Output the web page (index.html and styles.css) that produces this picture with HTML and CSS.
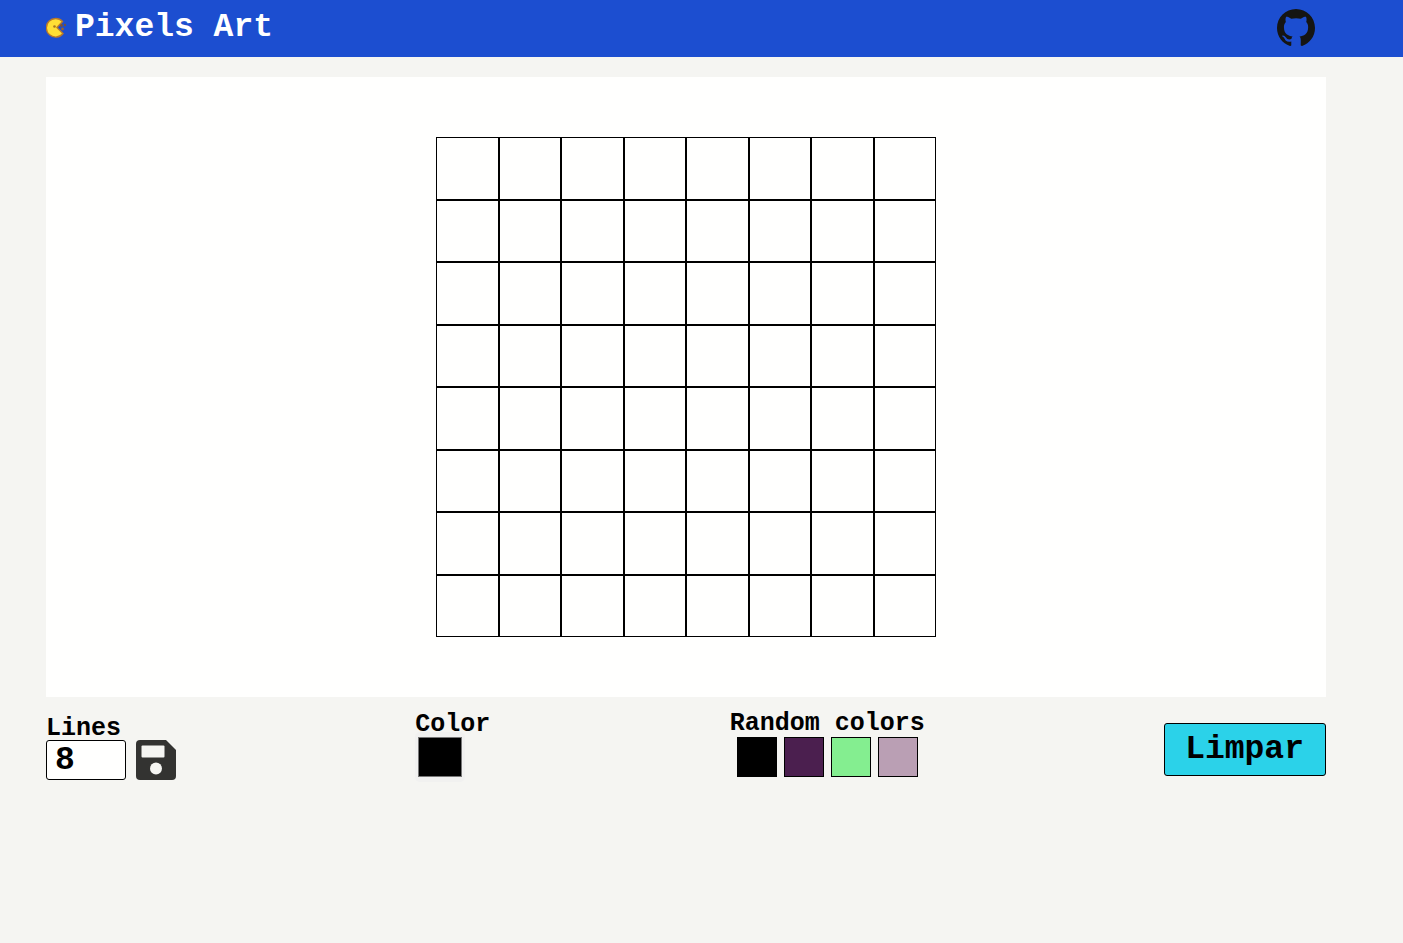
FILE: index.html
```html
<!DOCTYPE html>
<html lang="en">
<head>
<meta charset="utf-8">
<title>Pixels Art</title>
<link rel="stylesheet" href="styles.css">
</head>
<body>
<header class="header">
  <div class="brand">
    <svg class="brand-icon" viewBox="0 0 21 21" aria-hidden="true">
      <path d="M16.500 4.500 11 10.500 17 16.500A9.300 9.300 0 1 1 16.500 4.500Z" fill="#ffdf35" stroke="#b9792a" stroke-width="1.400"/>
      <circle cx="8.500" cy="9.500" r="1.300" fill="#a8741f"/>
      <circle cx="15.500" cy="8.500" r="1.400" fill="#7d5238"/>
      <circle cx="19" cy="8" r="1.200" fill="#75503f"/>
      <circle cx="16.500" cy="12" r="1.400" fill="#9b602a"/>
    </svg>
    <h1 class="title">Pixels Art</h1>
  </div>
  <a class="github" href="#" aria-label="GitHub">
    <svg class="github-icon" viewBox="0 0 16 16" aria-hidden="true"><path fill="#151513" d="M8 0C3.58 0 0 3.58 0 8c0 3.54 2.29 6.53 5.47 7.59.4.07.55-.17.55-.38 0-.19-.01-.82-.01-1.49-2.01.37-2.53-.49-2.69-.94-.09-.23-.48-.94-.82-1.13-.28-.15-.68-.52-.01-.53.63-.01 1.08.58 1.23.82.72 1.21 1.87.87 2.33.66.07-.52.28-.87.51-1.07-1.78-.2-3.64-.89-3.64-3.95 0-.87.31-1.59.82-2.15-.08-.2-.36-1.02.08-2.12 0 0 .67-.21 2.2.82.64-.18 1.32-.27 2-.27s1.36.09 2 .27c1.530-1.040 2.200-.82 2.200-.82.44 1.100.16 1.920.08 2.120.51.56.82 1.270.82 2.150 0 3.070-1.870 3.750-3.650 3.950.29.25.54.73.54 1.480 0 1.070-.01 1.930-.01 2.200 0 .21.15.46.55.38A8.010 8.010 0 0 0 16 8c0-4.420-3.580-8-8-8z"/></svg>
  </a>
</header>
<main class="main">
  <section class="canvas">
    <div class="board" id="board"></div>
  </section>
  <section class="controls">
    <div class="lines">
      <label class="label label-lines" for="lines">Lines</label>
      <div class="lines-row">
        <input class="lines-input" id="lines" type="number" value="8">
        <button class="save" type="button" aria-label="Save">
          <svg class="save-icon" viewBox="0 0 40 40" aria-hidden="true">
            <path fill="#333331" d="M4 0H30L40 10V36Q40 40 36 40H4Q0 40 0 36V4Q0 0 4 0Z"/>
            <rect x="5.500" y="5.500" width="23" height="12" rx="1" fill="#f5f5f2"/>
            <circle cx="20" cy="28.500" r="6" fill="#f5f5f2"/>
          </svg>
        </button>
      </div>
    </div>
    <div class="color">
      <label class="label label-color" for="color">Color</label>
      <input class="color-input" id="color" type="color" value="#000000">
    </div>
    <div class="palette">
      <span class="label label-palette" id="palette-label">Random colors</span>
      <div class="swatches" role="group" aria-labelledby="palette-label">
        <button class="swatch swatch-black" type="button" aria-label="Black"></button>
        <button class="swatch swatch-purple" type="button" aria-label="Purple"></button>
        <button class="swatch swatch-green" type="button" aria-label="Green"></button>
        <button class="swatch swatch-mauve" type="button" aria-label="Mauve"></button>
      </div>
    </div>
    <button class="clear" type="button">Limpar</button>
  </section>
</main>
<script src="script.js"></script>
</body>
</html>
```
FILE: styles.css
```css
* { box-sizing: border-box; }
body {
  margin: 0;
  background: #f5f5f2;
  color: #000;
  font-family: "Liberation Mono", monospace;
  font-weight: 700;
}
.header {
  display: flex;
  align-items: center;
  justify-content: space-between;
  min-height: 57px;
  padding: 0 88px 2px 46px;
  background: #1c4ed0;
}
.brand { display: flex; align-items: center; gap: 8px; }
.brand-icon { width: 21px; height: 21px; }
.title { margin: 0; color: #fff; font-size: 33px; line-height: 40px; }
.github, .github-icon { display: block; width: 38px; height: 38px; }
.main { padding: 20px 77px 20px 46px; }
.canvas {
  display: flex;
  justify-content: center;
  padding: 60px;
  background: #fffffe;
}
.board {
  display: grid;
  grid-template-columns: repeat(8, 1fr);
  width: 500px;
  aspect-ratio: 1;
}
.cell { border: 1px solid #000; }
.controls {
  display: flex;
  align-items: center;
  justify-content: space-between;
  padding-top: 17px;
}
.label { display: block; font-size: 25px; }
.label-lines { line-height: 22px; }
.label-palette { line-height: 20px; }
.label-color { line-height: 15px; }
.lines-row { display: flex; gap: 10px; }
.lines-input {
  width: 80px;
  height: 40px;
  padding: 0 8px;
  border: 1px solid #000;
  border-radius: 3px;
  background: #fffffe;
  color: #000;
  font: inherit;
  font-size: 33px;
  line-height: 36px;
}
.save { padding: 0; border: 0; background: none; }
.save-icon { display: block; width: 40px; height: 40px; }
.color-input {
  display: block;
  width: 50px;
  height: 50px;
  padding: 1px;
  border: 0;
  border-radius: 5px;
  background: #f1f1f0;
}
.palette { padding-bottom: 7px; }
.swatches { display: flex; justify-content: center; gap: 7px; padding-top: 3px; }
.swatch { width: 40px; height: 40px; padding: 0; border: 1px solid #000; }
.swatch-black { background: #000; }
.swatch-purple { background: #4b1f4f; }
.swatch-green { background: #84ee90; }
.swatch-mauve { background: #ba9fb4; }
.clear {
  padding: 5px 21px 5px 20px;
  border: 1px solid #000;
  border-radius: 3px;
  background: #2bd2e9;
  color: #000;
  font: inherit;
  font-size: 33px;
  line-height: 41px;
}
```
FILE: script.js
```js
const board = document.getElementById("board");
for (let i = 0; i < 64; i += 1) {
  const cell = document.createElement("div");
  cell.className = "cell";
  board.appendChild(cell);
}
```
